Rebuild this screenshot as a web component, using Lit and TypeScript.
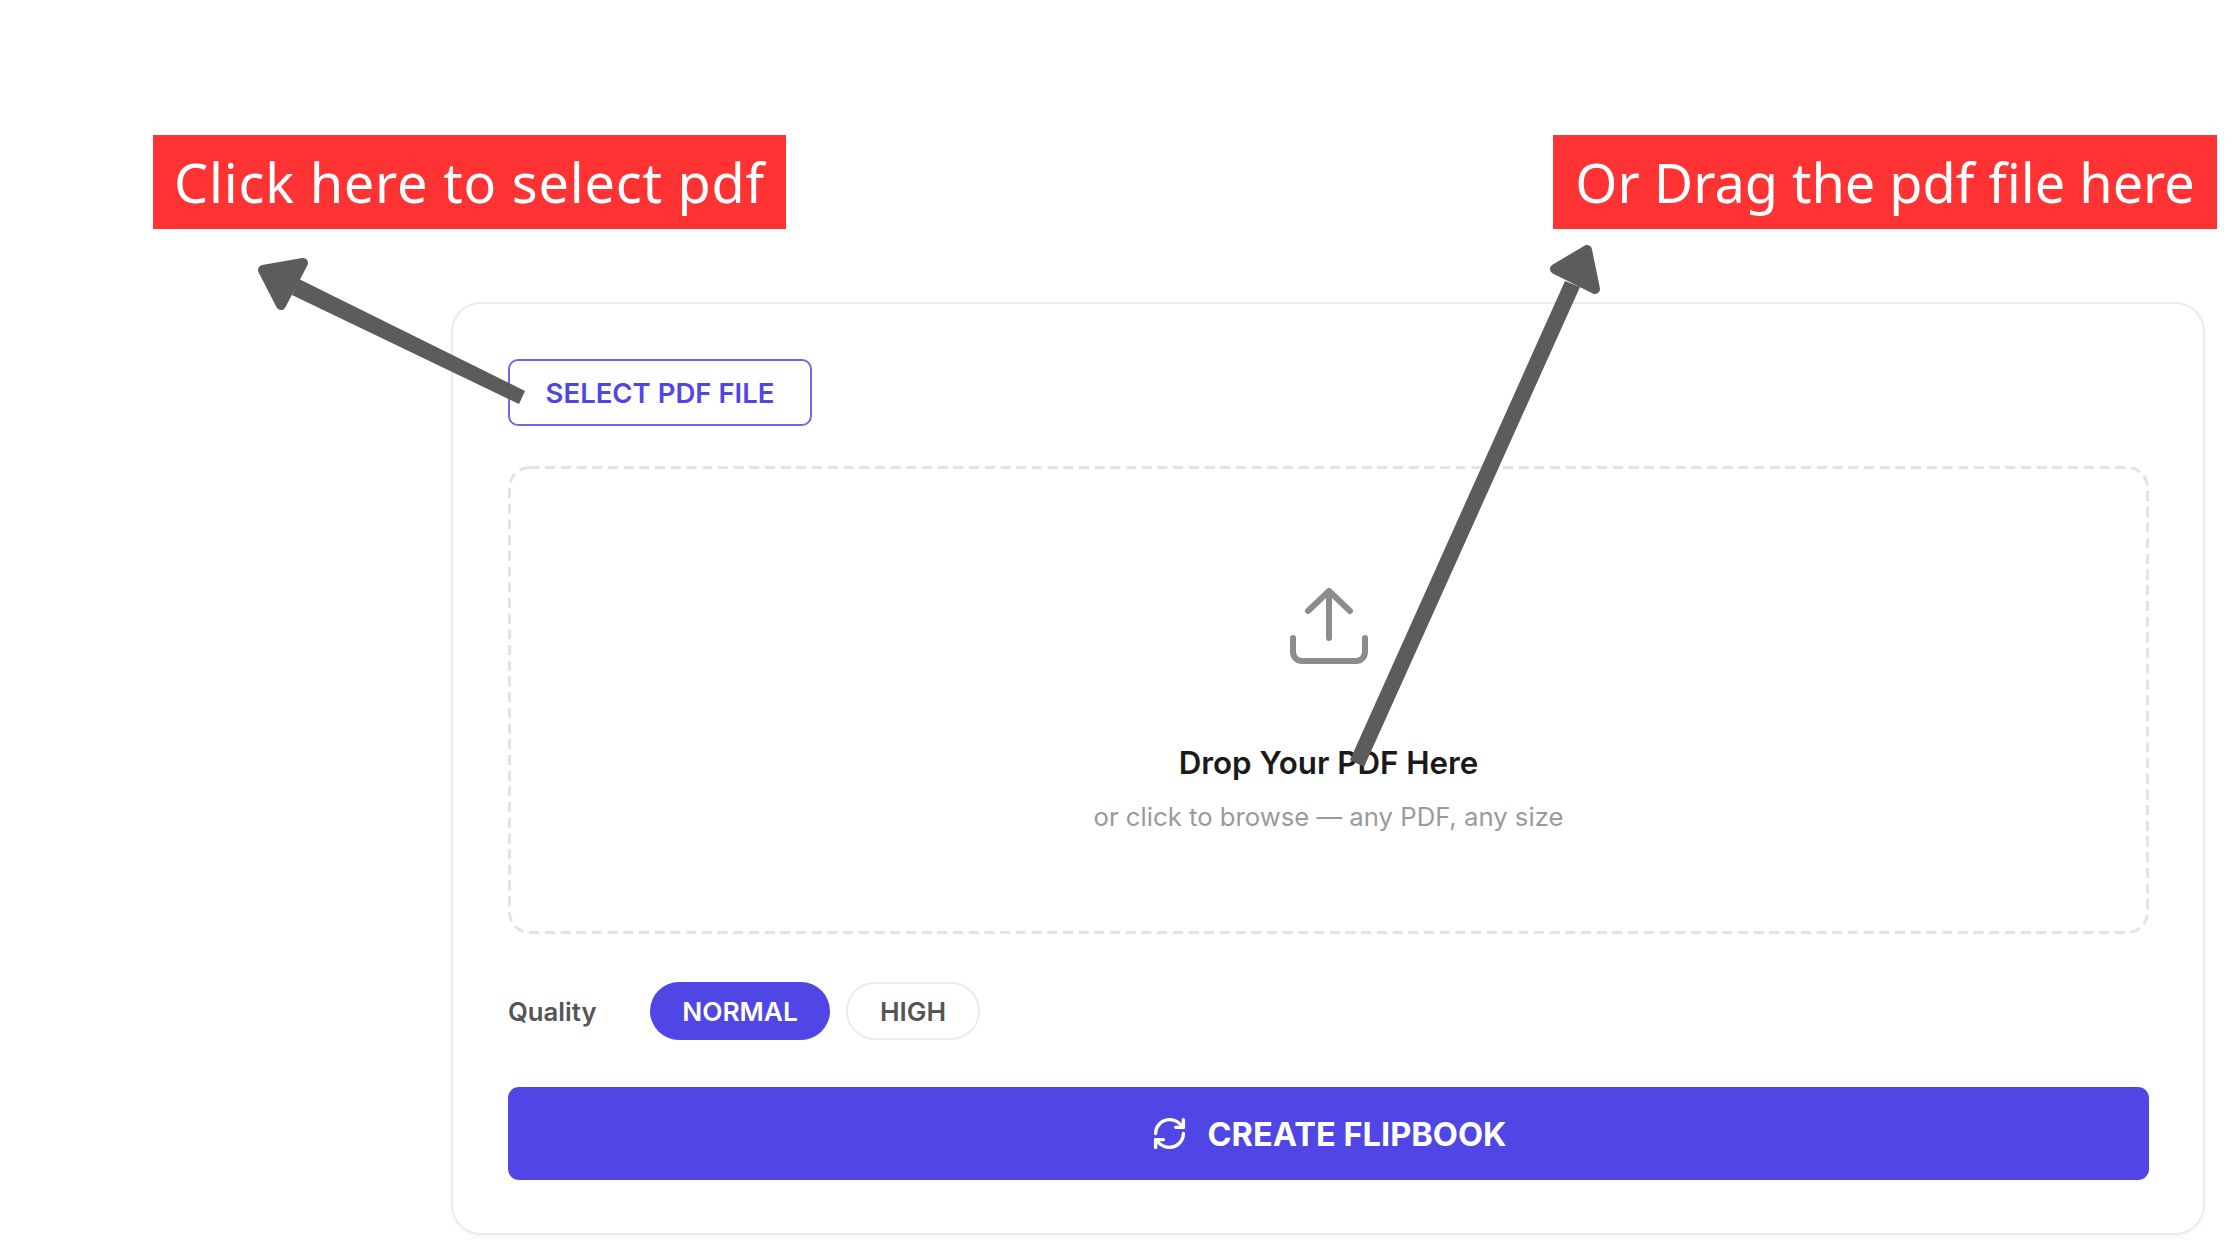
import { LitElement, html, css, svg } from "lit";
import { customElement } from "lit/decorators.js";

@customElement("app-root")
export class AppRoot extends LitElement {
  static styles = css`
    :host { display: block; position: relative; width: 2240px; height: 1260px; background: #fff; overflow: hidden; font-family: Inter, "Liberation Sans", sans-serif; }
    .page { display: flex; flex-direction: column; padding: 135px 23px 0 153px; box-sizing: border-box; height: 1260px; }
    .labels { display: flex; justify-content: space-between; }
    .label { height: 94px; display: flex; align-items: center; justify-content: center; background: #ff3333; color: #fff; font-family: "Noto Sans", sans-serif; font-size: 54px; }
    .label.a { width: 633px; letter-spacing: 0.8px; }
    .label.b { width: 664px; }
    .card { margin: 73px 12px 0 298px; width: 1754px; height: 933px; box-sizing: border-box; border: 2px solid #ebebeb; border-radius: 30px; background: #fff; box-shadow: 0 2px 6px rgba(0,0,0,.03); padding: 55px 54px 0 55px; display: flex; flex-direction: column; }
    .select { align-self: flex-start; width: 304px; height: 67px; box-sizing: border-box; border: 2px solid #6f67ea; border-radius: 10px; display: flex; align-items: center; justify-content: center; color: #4f46e5; font-size: 27.5px; font-weight: 600; }
    .drop { position: relative; margin-top: 40px; height: 468px; box-sizing: border-box; display: flex; flex-direction: column; align-items: center; }
    .dash { position: absolute; inset: 0; width: 100%; height: 100%; }
    .upload { margin-top: 121px; width: 78px; height: 86px; display: block; }
    .title { margin-top: 70px; font-size: 31.3px; line-height: 40px; font-weight: 600; color: #1a1a1a; }
    .sub { margin-top: 16px; font-size: 25.7px; line-height: 36px; color: #9a9a9a; }
    .quality { margin-top: 48px; display: flex; align-items: center; height: 58px; }
    .qlabel { width: 142px; font-size: 25.7px; font-weight: 600; color: #555; }
    .pill { box-sizing: border-box; height: 58px; display: flex; align-items: center; justify-content: center; border-radius: 29px; font-size: 26.3px; font-weight: 600; }
    .pill.on { width: 180px; background: #4f46e5; color: #fff; }
    .pill.off { width: 134px; margin-left: 16px; border: 2px solid #ebebeb; color: #555; }
    .create { margin-top: 47px; height: 93px; border-radius: 11px; background: #4f46e5; color: #fff; display: flex; align-items: center; justify-content: center; gap: 20px; font-size: 32.6px; font-weight: 700; }
    .create svg { width: 37px; height: 37px; display: block; }
    .overlay { position: absolute; inset: 0; width: 2240px; height: 1260px; pointer-events: none; }
  `;

  render() {
    return html`
      <div class="page">
        <div class="labels">
          <div class="label a">Click here to select pdf</div>
          <div class="label b">Or Drag the pdf file here</div>
        </div>
        <div class="card">
          <div class="select">SELECT PDF FILE</div>
          <div class="drop">
            <svg class="dash" viewBox="0 0 1641 468" fill="none">
              <rect x="1.5" y="1.5" width="1638" height="465" rx="20" stroke="#e3e3e3" stroke-width="3" stroke-dasharray="10 5.7"/>
            </svg>
            <svg class="upload" viewBox="0 0 78 86" fill="none" stroke="#8c8c8c" stroke-width="6" stroke-linecap="round" stroke-linejoin="round">
              <path d="M39 4V51M18 24L39 4L60 24"/>
              <path d="M3 51V65a9 9 0 0 0 9 9H66a9 9 0 0 0 9-9V51"/>
            </svg>
            <div class="title">Drop Your PDF Here</div>
            <div class="sub">or click to browse — any PDF, any size</div>
          </div>
          <div class="quality">
            <div class="qlabel">Quality</div>
            <div class="pill on">NORMAL</div>
            <div class="pill off">HIGH</div>
          </div>
          <div class="create">
            <svg viewBox="0 0 24 24" fill="none" stroke="#fff" stroke-width="2.2" stroke-linecap="round" stroke-linejoin="round">
              <path d="M3 12a9 9 0 0 1 9-9 9.75 9.75 0 0 1 6.74 2.74L21 8"/><path d="M21 3v5h-5"/><path d="M21 12a9 9 0 0 1-9 9 9.75 9.75 0 0 1-6.74-2.74L3 16"/><path d="M8 16H3v5"/>
            </svg>
            <span>CREATE FLIPBOOK</span>
          </div>
        </div>
      </div>
      <svg class="overlay" viewBox="0 0 2240 1260">
        ${svg`
          <g fill="#5c5c5c" stroke="#5c5c5c" stroke-linejoin="round">
            <polygon stroke="none" points="299,279 525,391 519,404 292,295"/>
            <polygon stroke-width="10" points="303,263 263,270 281,305"/>
            <polygon stroke="none" points="1565,281 1580,287 1364,767 1350,760"/>
            <polygon stroke-width="10" points="1587,250 1555,269 1595,289"/>
          </g>
        `}
      </svg>
    `;
  }
}
